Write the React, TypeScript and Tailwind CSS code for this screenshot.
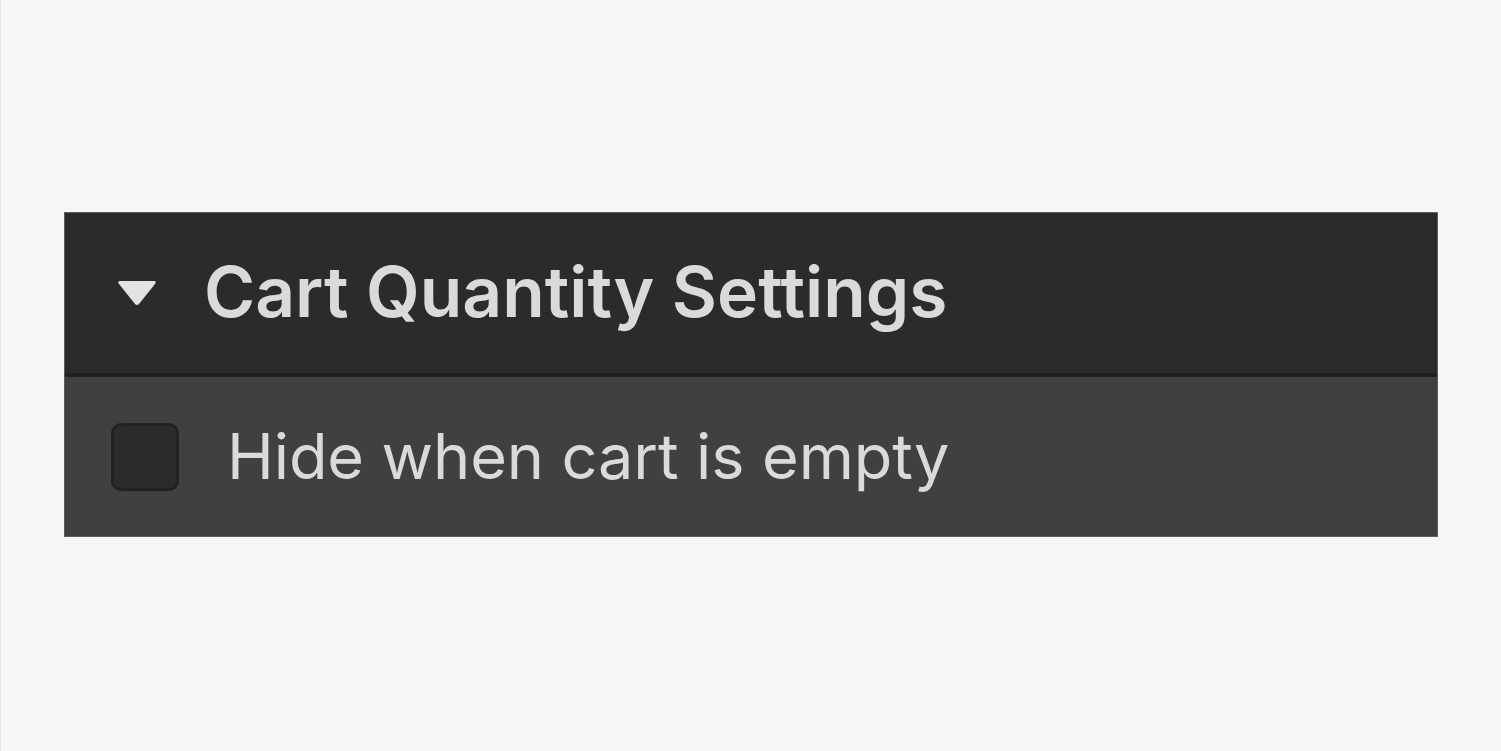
import React, { useState } from 'react';

export default function App() {
  const [open, setOpen] = useState(true);
  const [hideEmpty, setHideEmpty] = useState(false);

  return (
    <div className="min-h-screen w-full bg-[#f5f6f8] border-l border-[#e4e5e8] flex flex-col pt-[212px] pl-[63px] pr-[63px] font-['Inter',sans-serif]">
      <div className="w-[1374px] border border-[#5c5c5c] bg-[#404040]">
        <button
          onClick={() => setOpen(!open)}
          className="w-full h-[164px] flex items-center bg-[#2b2b2b] border-b-4 border-[#212121] pl-[52px] text-left"
        >
          <svg
            width="40"
            height="26"
            viewBox="0 0 40 26"
            className={open ? '' : '-rotate-90'}
          >
            <path d="M3 1 H37 Q40 1 38 4 L22 24 Q20 26 18 24 L2 4 Q0 1 3 1 Z" fill="#e3e3e3" />
          </svg>
          <span className="ml-[47px] text-[69.5px] leading-none font-semibold text-[#dadada]">
            Cart Quantity Settings
          </span>
        </button>
        {open && (
          <label className="h-[159px] flex items-center pl-[46px] cursor-pointer">
            <input
              type="checkbox"
              checked={hideEmpty}
              onChange={() => setHideEmpty(!hideEmpty)}
              className="appearance-none w-[68px] h-[68px] rounded-[10px] bg-[#2b2b2b] border-[3px] border-[#222222] checked:bg-[#3b82f6]"
            />
            <span className="ml-[48px] text-[63px] leading-none text-[#dadada] tracking-[-0.1px]">
              Hide when cart is empty
            </span>
          </label>
        )}
      </div>
    </div>
  );
}
